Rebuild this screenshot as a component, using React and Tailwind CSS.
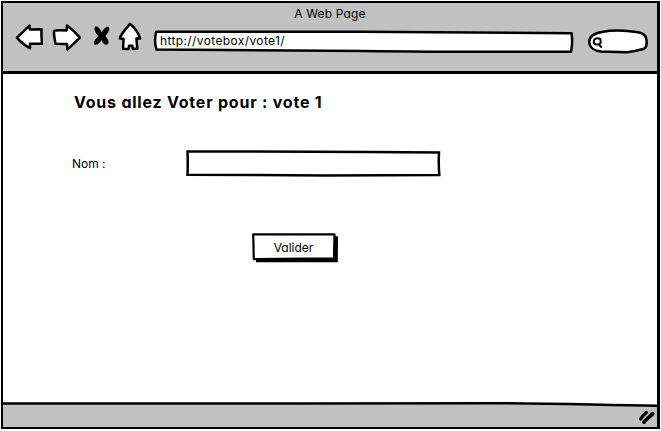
import React from "react";

const stroke = {
  fill: "white",
  stroke: "black",
  strokeWidth: 2.5,
  strokeLinejoin: "round",
  strokeLinecap: "round",
};

function BackIcon() {
  return (
    <svg className="h-7 w-7 shrink-0" viewBox="0 0 28 28" {...stroke}>
      <path d="M2 13.6 L14.5 1.6 L14.8 5.4 L26.6 5.2 C26 11 26.8 15 27 19.8 L15 19.8 L15 24.2 C10 21.5 5.5 18 2 13.6Z" />
    </svg>
  );
}

function ForwardIcon() {
  return (
    <svg className="h-7 w-[30px] shrink-0" viewBox="0 0 30 28" {...stroke}>
      <path d="M2 7.2 Q3 6 14.6 6.4 L15 1.4 C20 5 24 9 28 13.6 L15.4 25.6 L15 20 L3.4 19.7 C3 15 1.6 12 2 7.2Z" />
    </svg>
  );
}

function StopIcon() {
  return (
    <svg className="h-5 w-[18px] shrink-0" viewBox="0 0 18 20" stroke="black" strokeWidth="0.6">
      <path d="M2.2 .8 C5 -.2 7 3.5 8.8 6.6 C10.5 3.5 13 .3 15.6 1.2 C17 4 14 7.5 12.1 10 C14 12.5 16.3 15.5 14.6 18 C11.5 19.5 9.8 16.5 8.5 13.8 C6.8 16.5 4.2 19.4 1.4 18.2 C.3 15.5 3.5 12.5 5.6 10.2 C3.5 7.5 .8 4 2.2 .8Z" />
    </svg>
  );
}

function HomeIcon() {
  return (
    <svg className="h-[30px] w-6 shrink-0" viewBox="0 0 24 30" {...stroke}>
      <path d="M12 1.8 C16.2 5.5 20.2 10 22.2 16.6 L18.4 16.6 L19.3 26.6 L14.9 26.9 L14.3 23.8 L11 23.8 L10.6 27 L5.1 26.8 L5.5 16.8 L1.8 16.4 C3.5 11 8.2 7 12 1.8Z" />
    </svg>
  );
}

function SearchIcon() {
  return (
    <svg className="h-3 w-3" viewBox="0 0 12 12" fill="none" stroke="black" strokeWidth="2" strokeLinecap="round">
      <path d="M8.2 2 C5 .4 1.6 1.8 1.7 5 C2.2 8 6.8 8.2 8.4 6.2 C9 4.4 8.6 3.2 8.2 2 M6.8 7.4 L9.2 10" />
    </svg>
  );
}

function Toolbar() {
  return (
    <header className="flex h-[68px] flex-col bg-[#c1c1c1]">
      <h1 className="h-[21px] pt-[2px] text-center text-[12px] leading-[18px] tracking-[0.15px]">A Web Page</h1>
      <div className="flex items-start pl-[12px]">
        <BackIcon />
        <div className="ml-[9px]"><ForwardIcon /></div>
        <div className="ml-[11px] mt-[2px]"><StopIcon /></div>
        <div className="ml-[7px] -mt-[2px]"><HomeIcon /></div>
        <div className="relative ml-[11px] mt-[6px] h-[24px] w-[422px]">
          <svg className="absolute inset-0 h-full w-full" viewBox="0 0 422 24" {...stroke}>
            <path d="M3.2 1.8 L210 1.8 L418.5 3.2 Q420 12 418 21.8 C340 22 280 22 210 21 L3.5 19.6 Q.8 11 3.2 1.8Z" />
          </svg>
          <span className="relative block pl-[7px] text-[12px] leading-[21px] tracking-[0.38px]">http://votebox/vote1/</span>
        </div>
        <div className="relative ml-[12px] mt-[5px] h-[26px] w-[62px]">
          <svg className="absolute inset-0 h-full w-full" viewBox="0 0 62 26" {...stroke}>
            <path d="M15 3 C26 .8 39 1.4 51 3.2 Q58.4 4.5 59.2 9.5 C60.4 15 60 18 57 19.8 Q49 22.2 40 23.2 L14 22.4 C7 22 2.5 18.5 2.2 13 C2.4 7 8 4 15 3Z" />
          </svg>
          <div className="relative pl-[5px] pt-[8px]"><SearchIcon /></div>
        </div>
      </div>
    </header>
  );
}

function VoteForm() {
  return (
    <main className="flex h-[329px] flex-col bg-white">
      <h2 className="ml-[71px] mt-[16px] whitespace-nowrap text-[16px] font-bold leading-[24px] tracking-[0.78px]">Vous allez Voter pour : vote 1</h2>
      <div className="mt-[35px] flex h-[28px] items-center pl-[69px]">
        <label className="w-[112px] pt-[2px] text-[12px] leading-4">Nom :</label>
        <svg className="h-7 w-[257px]" viewBox="0 0 257 28" {...stroke} strokeLinejoin="miter">
          <path d="M3.5 2.4 C80 2.6 170 2.6 255 3.4 Q254.4 15 255.3 26 C170 26.6 90 26.6 3.5 25.8 Q4 15 3.5 2.4Z" />
        </svg>
      </div>
      <button className="relative ml-[248px] mt-[55px] h-[31px] w-[88px] pr-[3px] text-[12px] tracking-normal">
        <svg className="absolute inset-0 h-full w-full" viewBox="0 0 88 31">
          <path d="M5 5 L84 4 L87 4.4 L86.8 30.2 L5 30.2Z" />
          <path d="M2.2 2.4 L83.5 2.4 L83 26.4 L2.8 27.2Z" fill="white" stroke="black" strokeWidth="2.2" strokeLinejoin="round" />
        </svg>
        <span className="relative">Valider</span>
      </button>
    </main>
  );
}

function StatusBar() {
  return (
    <footer className="relative flex h-[24px] items-end justify-end bg-[#c1c1c1]">
      <svg className="absolute -top-[2px] left-0 h-[7px] w-full" viewBox="0 0 654 7" preserveAspectRatio="none">
        <path d="M0 0H654V4.5L490 2.5L0 2.5Z" fill="white" />
        <path d="M0 2.4 C150 3.4 330 2.2 490 2.2 C560 2.6 600 4.2 654 4.7" fill="none" stroke="black" strokeWidth="2.5" />
      </svg>
      <svg className="mb-[2px] mr-[1px] h-[15px] w-[18px]" viewBox="0 0 18 15" fill="none" stroke="black" strokeLinecap="round">
        <path d="M2.6 9 C4 6 6.2 4.2 8.4 2.4" strokeWidth="3.2" />
        <path d="M6 12 C8 9.4 11.4 7 14.6 3.8" strokeWidth="3.8" />
      </svg>
    </footer>
  );
}

export default function App() {
  return (
    <div className="h-[431px] w-[661px] overflow-hidden bg-white pl-px pt-px font-['Inter',sans-serif] text-black [font-feature-settings:'cv11']">
      <div className="h-[428px] w-[659px] border-2 border-r-[3px] border-black">
        <Toolbar />
        <div className="h-[3px] bg-black" />
        <VoteForm />
        <StatusBar />
      </div>
    </div>
  );
}
